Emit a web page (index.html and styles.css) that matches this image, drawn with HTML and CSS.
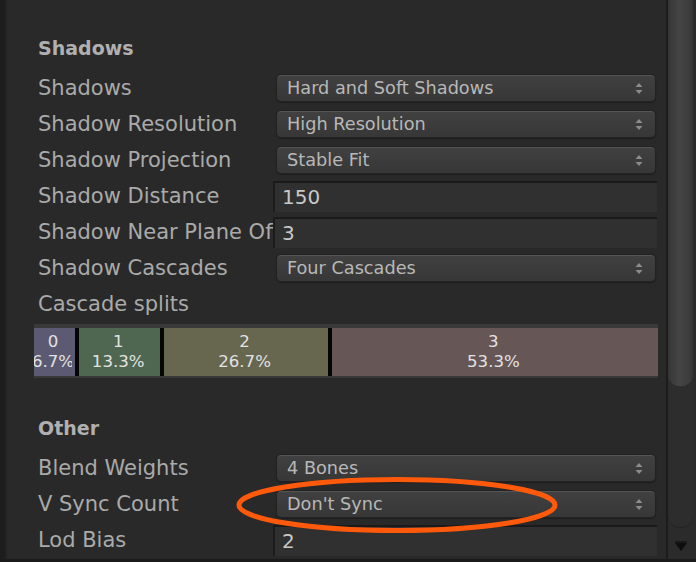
FILE: index.html
```html
<!DOCTYPE html>
<html>
<head>
<meta charset="utf-8">
<link rel="stylesheet" href="styles.css">
</head>
<body>
<div class="window">
  <div class="edge"></div>
  <div class="panel">
    <section class="group">
      <div class="header">Shadows</div>
      <div class="row"><div class="label">Shadows</div><div class="ctl"><div class="dropdown"><span>Hard and Soft Shadows</span><svg class="updown" width="8" height="13" viewBox="0 0 8 13"><polygon points="0.5,5 4,1 7.5,5"/><polygon points="0.5,8 4,12 7.5,8"/></svg></div></div></div>
      <div class="row"><div class="label">Shadow Resolution</div><div class="ctl"><div class="dropdown"><span>High Resolution</span><svg class="updown" width="8" height="13" viewBox="0 0 8 13"><polygon points="0.5,5 4,1 7.5,5"/><polygon points="0.5,8 4,12 7.5,8"/></svg></div></div></div>
      <div class="row"><div class="label">Shadow Projection</div><div class="ctl"><div class="dropdown"><span>Stable Fit</span><svg class="updown" width="8" height="13" viewBox="0 0 8 13"><polygon points="0.5,5 4,1 7.5,5"/><polygon points="0.5,8 4,12 7.5,8"/></svg></div></div></div>
      <div class="row"><div class="label">Shadow Distance</div><div class="ctl"><div class="field">150</div></div></div>
      <div class="row"><div class="label">Shadow Near Plane Offset</div><div class="ctl"><div class="field">3</div></div></div>
      <div class="row"><div class="label">Shadow Cascades</div><div class="ctl"><div class="dropdown"><span>Four Cascades</span><svg class="updown" width="8" height="13" viewBox="0 0 8 13"><polygon points="0.5,5 4,1 7.5,5"/><polygon points="0.5,8 4,12 7.5,8"/></svg></div></div></div>
      <div class="row"><div class="label">Cascade splits</div></div>
      <div class="cascade">
        <div class="seg c0" style="flex-grow:6.7"><div class="inner"><span>0</span><span>6.7%</span></div></div>
        <div class="split"></div>
        <div class="seg c1" style="flex-grow:13.3"><div class="inner"><span>1</span><span>13.3%</span></div></div>
        <div class="split"></div>
        <div class="seg c2" style="flex-grow:26.7"><div class="inner"><span>2</span><span>26.7%</span></div></div>
        <div class="split"></div>
        <div class="seg c3" style="flex-grow:53.3"><div class="inner"><span>3</span><span>53.3%</span></div></div>
      </div>
    </section>
    <section class="group other">
      <div class="header">Other</div>
      <div class="row"><div class="label">Blend Weights</div><div class="ctl"><div class="dropdown"><span>4 Bones</span><svg class="updown" width="8" height="13" viewBox="0 0 8 13"><polygon points="0.5,5 4,1 7.5,5"/><polygon points="0.5,8 4,12 7.5,8"/></svg></div></div></div>
      <div class="row"><div class="label">V Sync Count</div><div class="ctl"><div class="dropdown"><span>Don't Sync</span><svg class="updown" width="8" height="13" viewBox="0 0 8 13"><polygon points="0.5,5 4,1 7.5,5"/><polygon points="0.5,8 4,12 7.5,8"/></svg></div></div></div>
      <div class="row"><div class="label">Lod Bias</div><div class="ctl"><div class="field">2</div></div></div>
    </section>
    <svg class="annot" width="340" height="70" viewBox="0 0 340 70"><ellipse cx="167" cy="33" rx="158" ry="25.5"/></svg>
  </div>
  <div class="scrollbar">
    <div class="groove"><div class="thumb"></div></div>
    <div class="arrowbox"><svg width="12" height="10" viewBox="0 0 12 10"><rect x="0" y="0" width="12" height="2" fill="#1a1a1a"/><polygon points="0,2 12,2 6,10" fill="#0e0e0e"/></svg></div>
  </div>
</div>
</body>
</html>
```

FILE: styles.css
```css
html, body {
  margin: 0;
  padding: 0;
  background: #292929;
}
body {
  width: 696px;
  height: 562px;
  overflow: hidden;
  font-family: "DejaVu Sans", "Liberation Sans", sans-serif;
}
.window {
  display: flex;
  height: 559px;
  border-bottom: 3px solid #1b1b1b;
  overflow: hidden;
}
.edge {
  width: 5px;
  border-right: 2px solid #232323;
  background: #1d1d1d;
  flex: none;
}
.panel {
  flex: 1;
  position: relative;
  overflow: hidden;
  padding: 30px 9px 0 31px;
  background: #292929;
}
.header {
  height: 36px;
  line-height: 36px;
  margin-bottom: 4px;
  font-size: 19px;
  font-weight: bold;
  color: #b0b0b0;
}
.row {
  display: grid;
  grid-template-columns: 235px 1fr;
  height: 36px;
  align-items: center;
}
.label {
  font-size: 21px;
  line-height: 36px;
  color: #aaaaaa;
  white-space: nowrap;
  overflow: hidden;
}
.ctl {
  display: flex;
  flex-direction: column;
}
.dropdown {
  margin: 0 1px 0 3px;
  height: 26px;
  border: 1px solid #222;
  border-radius: 5px;
  background: linear-gradient(#414141, #373737);
  box-shadow: inset 0 1px 0 #555, 0 1px 1px #1e1e1e;
  display: flex;
  align-items: center;
  justify-content: space-between;
  padding: 0 12px 0 10px;
  font-size: 17.7px;
  color: #b8b8b8;
  white-space: nowrap;
}
.updown {
  fill: #8c8c8c;
  flex: none;
}
.field {
  height: 29px;
  border-top: 2px solid #1a1a1a;
  border-left: 2px solid #1c1c1c;
  background: #303030;
  font-size: 20px;
  line-height: 29px;
  padding-left: 7px;
  color: #c8c8c8;
}
.cascade {
  display: flex;
  height: 48px;
  margin: 2px -1px 0 -4px;
  border-top: 4px solid #3a3a3a;
  border-bottom: 2px solid #383838;
}
.seg {
  flex-basis: 0;
  min-width: 0;
  display: flex;
}
.inner {
  flex: 1;
  min-width: 0;
  margin: 0 3px 0 0;
  overflow: hidden;
  display: flex;
  flex-direction: column;
  align-items: center;
  justify-content: center;
  font-size: 16.6px;
  line-height: 20px;
  color: #e2e2e2;
  white-space: nowrap;
}
.split {
  width: 4px;
  flex: none;
  background: #050505;
}
.c0 { background: #5b5a72; }
.c1 { background: #4f6650; }
.c2 { background: #67664f; }
.c3 { background: #665656; }
.other {
  margin-top: 32px;
}
.annot {
  position: absolute;
  left: 223px;
  top: 472px;
  fill: none;
  stroke: #ff5a0c;
  stroke-width: 5;
}
.scrollbar {
  width: 28px;
  flex: none;
  border-left: 2px solid #1c1c1c;
  background: #2b2b2b;
  display: flex;
  flex-direction: column;
}
.groove {
  height: 527px;
  width: 25px;
  background: #2d2d2d;
  border-radius: 0 0 12px 12px;
  box-shadow: 0 1px 0 #242424;
}
.thumb {
  height: 385px;
  width: 25px;
  border-radius: 0 0 12px 12px;
  background: linear-gradient(to right, #363636, #454545 45%, #3e3e3e 80%, #353535);
  box-shadow: 0 1px 0 #484848;
}
.arrowbox {
  flex: 1;
  display: flex;
  justify-content: center;
  align-items: flex-start;
  padding: 14px 3px 0 0;
}
```
